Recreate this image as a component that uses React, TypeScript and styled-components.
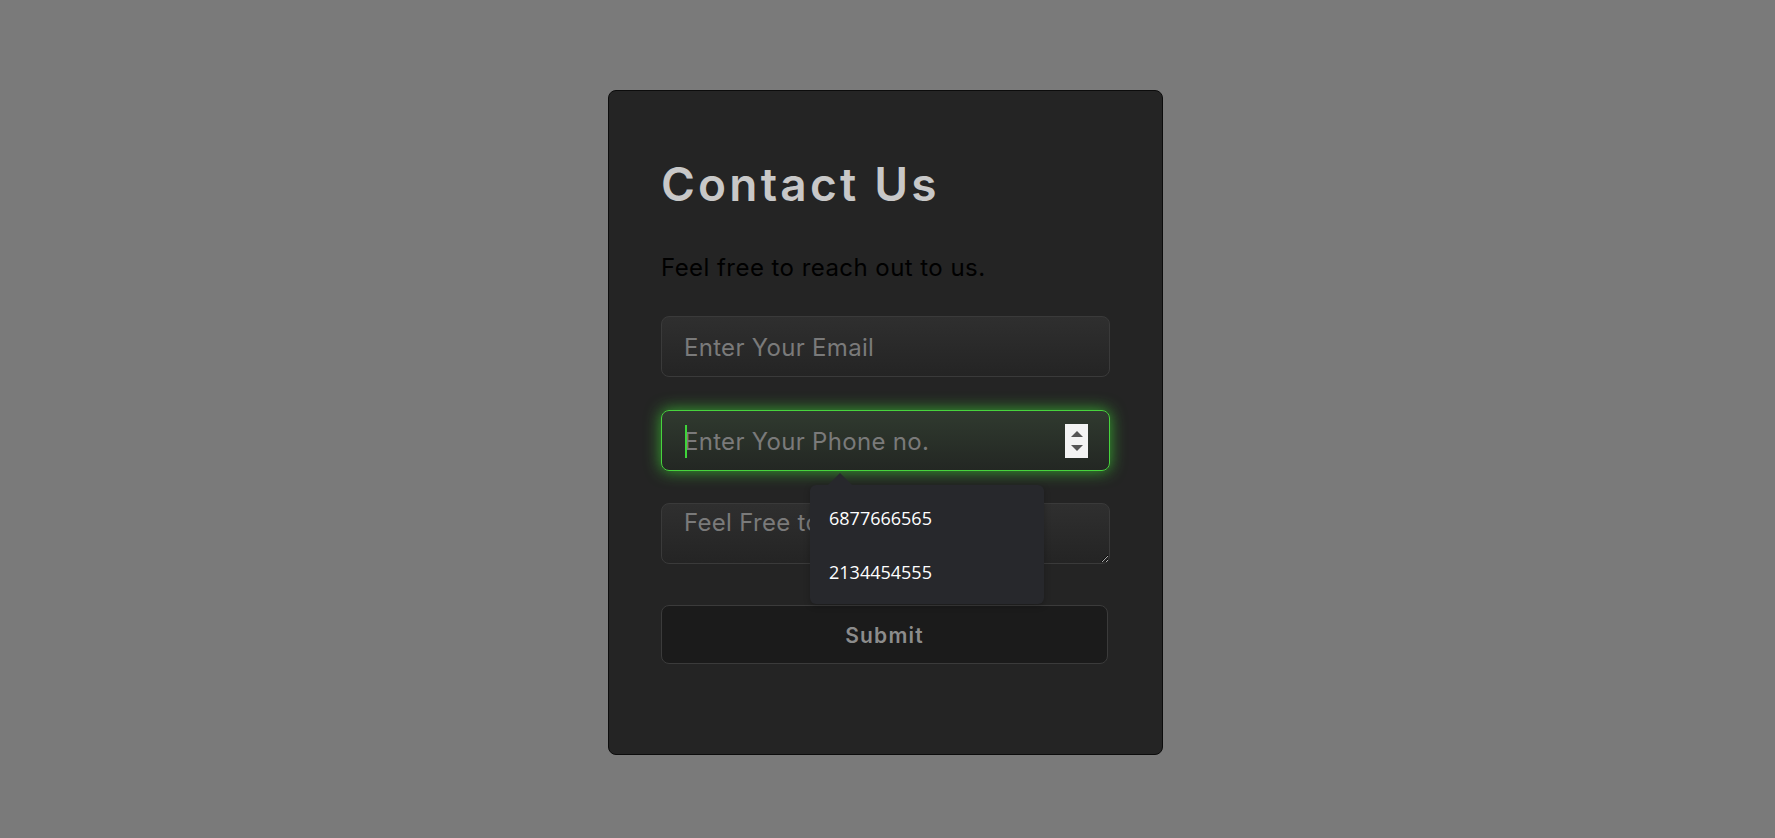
import React from "react";
import styled, { createGlobalStyle, css } from "styled-components";

const Global = createGlobalStyle`
  html, body { margin: 0; padding: 0; background: #7a7a7a; }
  body { font-family: Inter, "Noto Sans", sans-serif; }
  * { box-sizing: border-box; }
`;

const Page = styled.main`
  min-height: 838px;
  display: flex;
  justify-content: center;
  align-items: flex-start;
  padding: 90px 4px 0 0;
`;

const Card = styled.form`
  width: 555px;
  height: 665px;
  background: #242424;
  border: 1px solid #0c0c0c;
  border-radius: 8px;
  padding: 65px 52px 0;
  display: flex;
  flex-direction: column;
  align-items: flex-start;
`;

const Title = styled.h1`
  margin: 0;
  font-size: 46px;
  line-height: 56px;
  font-weight: 600;
  letter-spacing: 3.2px;
  color: #c8c8c8;
`;

const Subtitle = styled.p`
  margin: 40px 0 0;
  font-size: 24px;
  line-height: 32px;
  font-weight: 400;
  letter-spacing: 0.45px;
  color: #000;
`;

const fieldBase = css`
  width: 449px;
  height: 61px;
  border: 1px solid #3a3a3a;
  border-radius: 8px;
  background: linear-gradient(180deg, #2f2f2f 0%, #242424 100%);
  padding: 1px 22px 0;
  font-family: Inter, "Noto Sans", sans-serif;
  font-size: 24px;
  letter-spacing: 0.3px;
  color: #cfcfcf;
  outline: none;
  &::placeholder {
    color: #7a7a7a;
  }
`;

const Field = styled.input<{ $focused?: boolean }>`
  ${fieldBase}
  display: block;
  ${(p) =>
    p.$focused &&
    css`
      border-color: #47d43d;
      background: linear-gradient(180deg, #303a2f 0%, #232723 100%);
      box-shadow: 0 0 16px rgba(62, 214, 52, 0.75);
    `}
`;

const EmailRow = styled.div`
  margin-top: 32px;
`;

const PhoneRow = styled.div`
  margin-top: 33px;
  position: relative;
`;

const Caret = styled.span`
  position: absolute;
  left: 24px;
  top: 15px;
  width: 1.5px;
  height: 33px;
  background: #3fd43a;
`;

const Spinner = styled.div`
  position: absolute;
  right: 22px;
  top: 14px;
  width: 23px;
  height: 34px;
  background: #f3f3f3;
  display: flex;
  flex-direction: column;
  align-items: center;
  justify-content: space-around;
  padding: 3px 0;
`;

const SpinArrow = styled.span<{ $dir: "up" | "down" }>`
  width: 0;
  height: 0;
  border-left: 6px solid transparent;
  border-right: 6px solid transparent;
  ${(p) =>
    p.$dir === "up"
      ? css`border-bottom: 6px solid #555;`
      : css`border-top: 6px solid #555;`}
`;

const Suggestions = styled.ul`
  position: absolute;
  left: 149px;
  top: 75px;
  width: 234px;
  height: 119px;
  margin: 0;
  padding: 6px 0 0;
  list-style: none;
  background: #27282c;
  border-radius: 6px;
  z-index: 2;
  box-shadow: 0 2px 6px rgba(0, 0, 0, 0.25);
  &::before {
    content: "";
    position: absolute;
    left: 18px;
    top: -12px;
    border-left: 12px solid transparent;
    border-right: 12px solid transparent;
    border-bottom: 12px solid #27282c;
  }
`;

const Suggestion = styled.li`
  height: 54px;
  line-height: 54px;
  padding-left: 19px;
  font-family: "Open Sans", "Noto Sans", sans-serif;
  font-size: 18px;
  color: #fff;
`;

const Message = styled.textarea`
  ${fieldBase}
  display: block;
  margin-top: 32px;
  padding-top: 1px;
  line-height: 36px;
  resize: vertical;
  color-scheme: dark;
`;

const SubmitButton = styled.button`
  margin-top: 41px;
  width: 447px;
  height: 59px;
  background: #1b1b1b;
  border: 1px solid #3b3b3b;
  border-radius: 8px;
  color: #8c8c8c;
  font-family: Inter, "Noto Sans", sans-serif;
  font-size: 21px;
  font-weight: 600;
  letter-spacing: 1.2px;
  padding-top: 2px;
  cursor: pointer;
`;

export default function App() {
  return (
    <>
      <Global />
      <Page>
        <Card onSubmit={(e) => e.preventDefault()}>
          <Title>Contact Us</Title>
          <Subtitle>Feel free to reach out to us.</Subtitle>
          <EmailRow>
            <Field type="email" placeholder="Enter Your Email" />
          </EmailRow>
          <PhoneRow>
            <Field type="text" placeholder="Enter Your Phone no." $focused />
            <Caret />
            <Spinner>
              <SpinArrow $dir="up" />
              <SpinArrow $dir="down" />
            </Spinner>
            <Suggestions>
              <Suggestion>6877666565</Suggestion>
              <Suggestion>2134454555</Suggestion>
            </Suggestions>
          </PhoneRow>
          <Message placeholder="Feel Free to Write Us" />
          <SubmitButton type="submit">Submit</SubmitButton>
        </Card>
      </Page>
    </>
  );
}
